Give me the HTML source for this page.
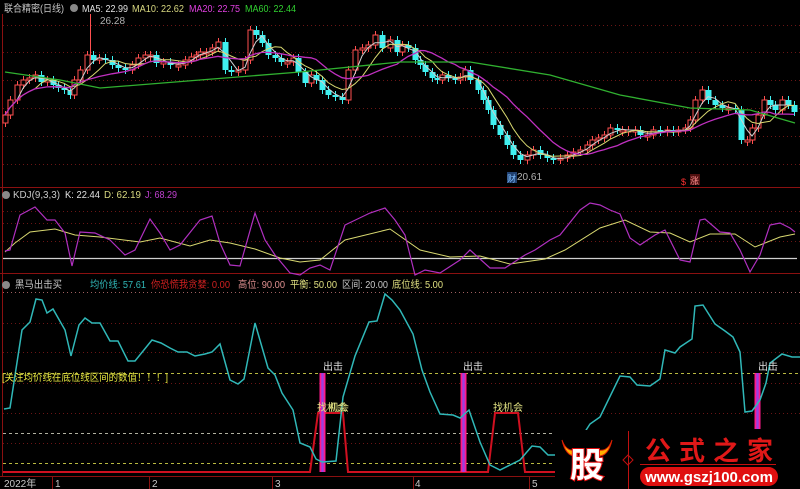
<!DOCTYPE html>
<html><head><meta charset="utf-8">
<style>
html,body{margin:0;padding:0;background:#000;}
body{width:800px;height:489px;overflow:hidden;position:relative;font-family:"Liberation Sans","Noto Sans CJK SC",sans-serif;}
svg{position:absolute;left:0;top:0;}
text{font-family:"Liberation Sans","Noto Sans CJK SC",sans-serif;}
</style></head><body>
<svg id="s" width="800" height="489" viewBox="0 0 800 489" xmlns="http://www.w3.org/2000/svg">
<rect width="800" height="489" fill="#000"/>
<g stroke="#8a1010" stroke-width="1" fill="none">
<line x1="2.5" y1="14" x2="2.5" y2="476"/>
<line x1="0" y1="187.5" x2="800" y2="187.5"/>
<line x1="0" y1="273.5" x2="800" y2="273.5"/>
<line x1="0" y1="476.5" x2="800" y2="476.5"/>
</g>
<g stroke="#6a1515" stroke-dasharray="1,3" stroke-width="1">
<line x1="3" y1="25.5" x2="800" y2="25.5"/><line x1="3" y1="52.5" x2="800" y2="52.5"/>
<line x1="3" y1="80.5" x2="800" y2="80.5"/><line x1="3" y1="108.5" x2="800" y2="108.5"/>
<line x1="3" y1="136.5" x2="800" y2="136.5"/><line x1="3" y1="164.5" x2="800" y2="164.5"/>
<line x1="3" y1="211.5" x2="800" y2="211.5"/><line x1="3" y1="223.5" x2="800" y2="223.5"/>
<line x1="3" y1="241.5" x2="800" y2="241.5"/>
<line x1="3" y1="292.5" x2="800" y2="292.5" stroke="#a06060"/>
<line x1="3" y1="323.5" x2="800" y2="323.5"/><line x1="3" y1="352.5" x2="800" y2="352.5"/>
<line x1="3" y1="383.5" x2="800" y2="383.5"/><line x1="3" y1="413.5" x2="800" y2="413.5"/>
<line x1="3" y1="443.5" x2="800" y2="443.5"/>
</g>
<g stroke-dasharray="3,3" stroke-width="1">
<line x1="3" y1="373.5" x2="800" y2="373.5" stroke="#b8b840"/>
<line x1="3" y1="433.5" x2="800" y2="433.5" stroke="#b0b0a0"/>
<line x1="3" y1="463.5" x2="800" y2="463.5" stroke="#b8b840"/>
</g>
<g id="candles"></g>
<g id="mas"></g>
<line x1="3" y1="258.5" x2="797" y2="258.5" stroke="#d0d0d0" stroke-width="1.2"/>
<polyline fill="none" stroke="#d8d870" stroke-width="1" points="5,252 15,243 30,232 55,229 75,235 100,237 140,242 160,238 190,246 210,240 230,243 255,249 280,258 300,262 320,260 345,240 390,229 420,250 450,257 480,256 510,264 545,259 565,250 600,228 625,220 650,232 670,233 690,242 710,234 735,234 755,247 780,237 795,234"/>
<polyline fill="none" stroke="#b030c0" stroke-width="1.2" points="5,251 10,250 20,215 35,207 47,220 55,220 65,233 72,266 80,232 95,233 110,240 125,255 135,250 150,219 160,233 170,250 180,245 200,220 212,216 220,243 230,265 240,266 255,213 265,240 275,255 290,273 300,275 310,268 320,265 330,270 345,225 370,213 385,208 395,220 405,235 415,275 425,270 440,273 460,260 470,250 490,268 505,268 525,255 535,250 550,240 560,235 580,210 590,203 600,205 610,210 620,214 630,238 640,245 655,235 665,230 680,260 690,262 700,220 705,219 720,232 730,233 740,250 750,272 760,255 770,225 780,223 790,228 795,232"/>
<polyline fill="none" stroke="#d01020" stroke-width="2" points="3,472 310,472 318,413 321,413 326,413 329,413 343,413 348,472 488,472 495,413 518,413 525,472 555,472"/>
<rect x="319.5" y="373" width="6" height="99" fill="#ff1a8c"/><rect x="321.3" y="373" width="2.4" height="99" fill="#9a40e0"/>
<rect x="460.5" y="373" width="6" height="99" fill="#ff1a8c"/><rect x="462.3" y="373" width="2.4" height="99" fill="#9a40e0"/>
<rect x="754.5" y="373" width="6" height="56" fill="#ff1a8c"/><rect x="756.3" y="373" width="2.4" height="56" fill="#9a40e0"/>
<polyline fill="none" stroke="#30b8b8" stroke-width="1.5" points="4,409 10,408 22,330 30,322 36,299 42,300 47,313 53,309 65,330 71,356 79,325 85,318 92,323 100,323 110,341 118,341 128,361 135,361 152,340 161,343 170,348 178,352 187,352 195,356 205,354 212,352 220,344 230,380 238,384 244,379 255,323 268,368 275,375 282,393 293,410 300,443 310,447 316,459 322,462 336,461 343,397 355,356 369,322 377,321 385,294 392,300 400,310 413,334 422,370 430,392 440,414 453,415 460,418 469,410 480,442 490,465 500,470 512,464 520,460 532,446 540,447 548,455 556,455 570,455 590,424 600,417 620,376 630,377 637,385 650,386 660,379 665,350 675,353 680,347 692,339 695,306 703,305 715,324 725,331 733,337 740,352 745,412 752,411 760,400 766,383 770,363 782,354 792,357 800,357"/>
<g font-size="10" lengthAdjust="spacingAndGlyphs">
<text x="4" y="12" fill="#c8c8c8" textLength="60" lengthAdjust="spacingAndGlyphs">联合精密(日线)</text>
<circle cx="74" cy="8" r="4" fill="#888"/>
<text x="82" y="12" fill="#e0e0e0" textLength="46" lengthAdjust="spacingAndGlyphs">MA5: 22.99</text>
<text x="132" y="12" fill="#d8d880" textLength="52" lengthAdjust="spacingAndGlyphs">MA10: 22.62</text>
<text x="189" y="12" fill="#e040e0" textLength="51" lengthAdjust="spacingAndGlyphs">MA20: 22.75</text>
<text x="245" y="12" fill="#30d030" textLength="51" lengthAdjust="spacingAndGlyphs">MA60: 22.44</text>
<text x="100" y="24" fill="#b0b0b0">26.28</text>
<text x="517" y="180" fill="#b0b0b0">20.61</text>
<rect x="507" y="172" width="10" height="11" fill="#204070"/><text x="507" y="182" font-size="9" fill="#80c0ff">财</text>
<text x="681" y="185" font-size="9" fill="#ff3030">$</text>
<rect x="690" y="174" width="10" height="11" fill="#501010"/><text x="690" y="184" font-size="9" fill="#ff9090">涨</text>
<circle cx="6" cy="195" r="4" fill="#888"/>
<text x="13" y="198" fill="#c8c8c8" textLength="47" lengthAdjust="spacingAndGlyphs">KDJ(9,3,3)</text>
<text x="65" y="198" fill="#e0e0e0" textLength="35" lengthAdjust="spacingAndGlyphs">K: 22.44</text>
<text x="104" y="198" fill="#d8d880" textLength="37" lengthAdjust="spacingAndGlyphs">D: 62.19</text>
<text x="145" y="198" fill="#c040d0" textLength="32" lengthAdjust="spacingAndGlyphs">J: 68.29</text>
<circle cx="6" cy="285" r="4" fill="#888"/>
<text x="15" y="288" fill="#c8c8c8" textLength="47" lengthAdjust="spacingAndGlyphs">黑马出击买</text>
<text x="90" y="288" fill="#30b8b8" textLength="56" lengthAdjust="spacingAndGlyphs">均价线: 57.61</text>
<text x="151" y="288" fill="#d02020" textLength="79" lengthAdjust="spacingAndGlyphs">你恐慌我贪婪: 0.00</text>
<text x="238" y="288" fill="#e09090" textLength="47" lengthAdjust="spacingAndGlyphs">高位: 90.00</text>
<text x="290" y="288" fill="#e0e080" textLength="47" lengthAdjust="spacingAndGlyphs">平衡: 50.00</text>
<text x="342" y="288" fill="#c8c8c8" textLength="46" lengthAdjust="spacingAndGlyphs">区间: 20.00</text>
<text x="392" y="288" fill="#e0e080" textLength="51" lengthAdjust="spacingAndGlyphs">底位线: 5.00</text>
<text x="2" y="381" fill="#e8e840" textLength="166" lengthAdjust="spacingAndGlyphs">[关注均价线在底位线区间的数值！！！]</text>
<text x="323" y="370" fill="#e0e0e0">出击</text>
<text x="463" y="370" fill="#e0e0e0">出击</text>
<text x="758" y="370" fill="#e0e0e0">出击</text>
<text x="317" y="411" fill="#e0e080">找机会</text>
<text x="329" y="411" fill="#e0e080">机会</text>
<text x="493" y="411" fill="#e0e080">找机会</text>
<text x="4" y="487" fill="#c8c8c8">2022年</text>
<text x="55" y="487" fill="#c8c8c8">1</text>
<text x="152" y="487" fill="#c8c8c8">2</text>
<text x="275" y="487" fill="#c8c8c8">3</text>
<text x="415" y="487" fill="#c8c8c8">4</text>
<text x="532" y="487" fill="#c8c8c8">5</text>
</g>
<g stroke="#8a1010"><line x1="52.5" y1="476" x2="52.5" y2="489"/><line x1="149.5" y1="476" x2="149.5" y2="489"/><line x1="272.5" y1="476" x2="272.5" y2="489"/><line x1="413.5" y1="476" x2="413.5" y2="489"/><line x1="529.5" y1="476" x2="529.5" y2="489"/></g>
<rect x="555" y="430" width="245" height="59" fill="#000"/>
<path d="M562,440 Q566,452 576,450 L578,456 Q566,458 562,440Z" fill="#ffb000" stroke="#e02000"/>
<path d="M612,440 Q608,452 598,450 L596,456 Q608,458 612,440Z" fill="#ffb000" stroke="#e02000"/>
<text x="570" y="477" font-size="34" font-weight="bold" fill="#fff" stroke="#e01010" stroke-width="2" paint-order="stroke">股</text>
<line x1="628.5" y1="431" x2="628.5" y2="489" stroke="#c01010"/>
<path d="M628,455 l5,5 l-5,5 l-5,-5Z" fill="none" stroke="#c01010"/>
<text x="645" y="460" font-size="26" font-weight="bold" fill="#e01818" letter-spacing="8">公式之家</text>
<line x1="640" y1="464.5" x2="776" y2="464.5" stroke="#c01010"/>
<rect x="640" y="467" width="138" height="19" rx="9.5" fill="#e01010"/>
<text x="709" y="482" font-size="15" font-weight="bold" fill="#fff" text-anchor="middle">www.gszj100.com</text>
</svg>
<script>
(function(){
var P=[[5,115],[10,100],[17,85],[23,80],[29,78],[35,75],[41,82],[47,80],[53,85],[58,88],[64,90],[70,95],[74,80],[80,70],[87,55],[93,60],[99,58],[105,60],[112,65],[118,68],[125,70],[132,65],[138,58],[145,55],[150,55],[156,63],[163,62],[170,65],[178,65],[185,60],[191,57],[196,55],[200,52],[206,52],[212,48],[218,42],[225,70],[231,72],[238,70],[245,60],[250,30],[256,35],[262,43],[268,55],[275,58],[281,62],[287,62],[293,58],[298,72],[305,83],[311,75],[316,80],[322,90],[328,95],[335,97],[342,100],[348,70],[355,50],[362,48],[368,45],[375,35],[382,48],[390,40],[397,52],[402,45],[408,48],[415,60],[420,65],[425,72],[432,78],[437,80],[442,75],[448,78],[455,80],[460,77],[465,70],[470,80],[478,90],[483,100],[488,110],[493,125],[500,135],[507,145],[513,155],[520,160],[527,155],[533,150],[540,155],[547,158],[553,160],[560,158],[567,155],[573,152],[580,150],[587,145],[592,140],[598,138],[604,135],[610,128],[617,130],[622,130],[628,130],[635,130],[640,135],[647,135],[653,130],[660,132],[667,130],[673,132],[678,130],[685,128],[690,120],[695,100],[702,90],[708,100],[715,105],[722,108],[728,108],[735,110],[741,140],[747,140],[752,128],[758,115],[764,100],[770,105],[775,110],[782,100],[788,105],[794,112]];
var ns="http://www.w3.org/2000/svg",g=document.getElementById("candles"),m=document.getElementById("mas");
function el(t,a,p){var e=document.createElementNS(ns,t);for(var k in a)e.setAttribute(k,a[k]);p.appendChild(e);return e;}
for(var i=0;i<P.length;i++){var x=P[i][0],c=P[i][1],o=i?P[i-1][1]:c+8;if(Math.abs(o-c)<2)o=c+2;var up=c<o;var tp=Math.min(o,c),bt=Math.max(o,c);
var col=up?"#ff5050":"#40f0f0";el("line",{x1:x+0.5,y1:tp-4,x2:x+0.5,y2:bt+4,stroke:col},g);
if(up)el("rect",{x:x-2,y:tp,width:5,height:bt-tp,fill:"#000",stroke:col},g);else el("rect",{x:x-2.5,y:tp,width:6,height:bt-tp,fill:col},g);}
el("line",{x1:90.5,y1:14,x2:90.5,y2:60,stroke:"#ff5050"},g);
function ma(n,col,w){var pts=[];for(var i=0;i<P.length;i++){var s=0,k=0;for(var j=Math.max(0,i-n+1);j<=i;j++){s+=P[j][1];k++;}pts.push(P[i][0]+","+(s/k).toFixed(1));}el("polyline",{points:pts.join(" "),fill:"none",stroke:col,"stroke-width":w},m);}
ma(3,"#d0d0d0",1);ma(6,"#d8d870",1);ma(12,"#c030c0",1.3);
el("polyline",{points:"5,72 60,80 100,88 200,80 300,72 400,62 470,62 550,75 620,95 690,108 750,110 795,123",fill:"none",stroke:"#30b030","stroke-width":1.3},m);
})();
</script>
</body></html>
